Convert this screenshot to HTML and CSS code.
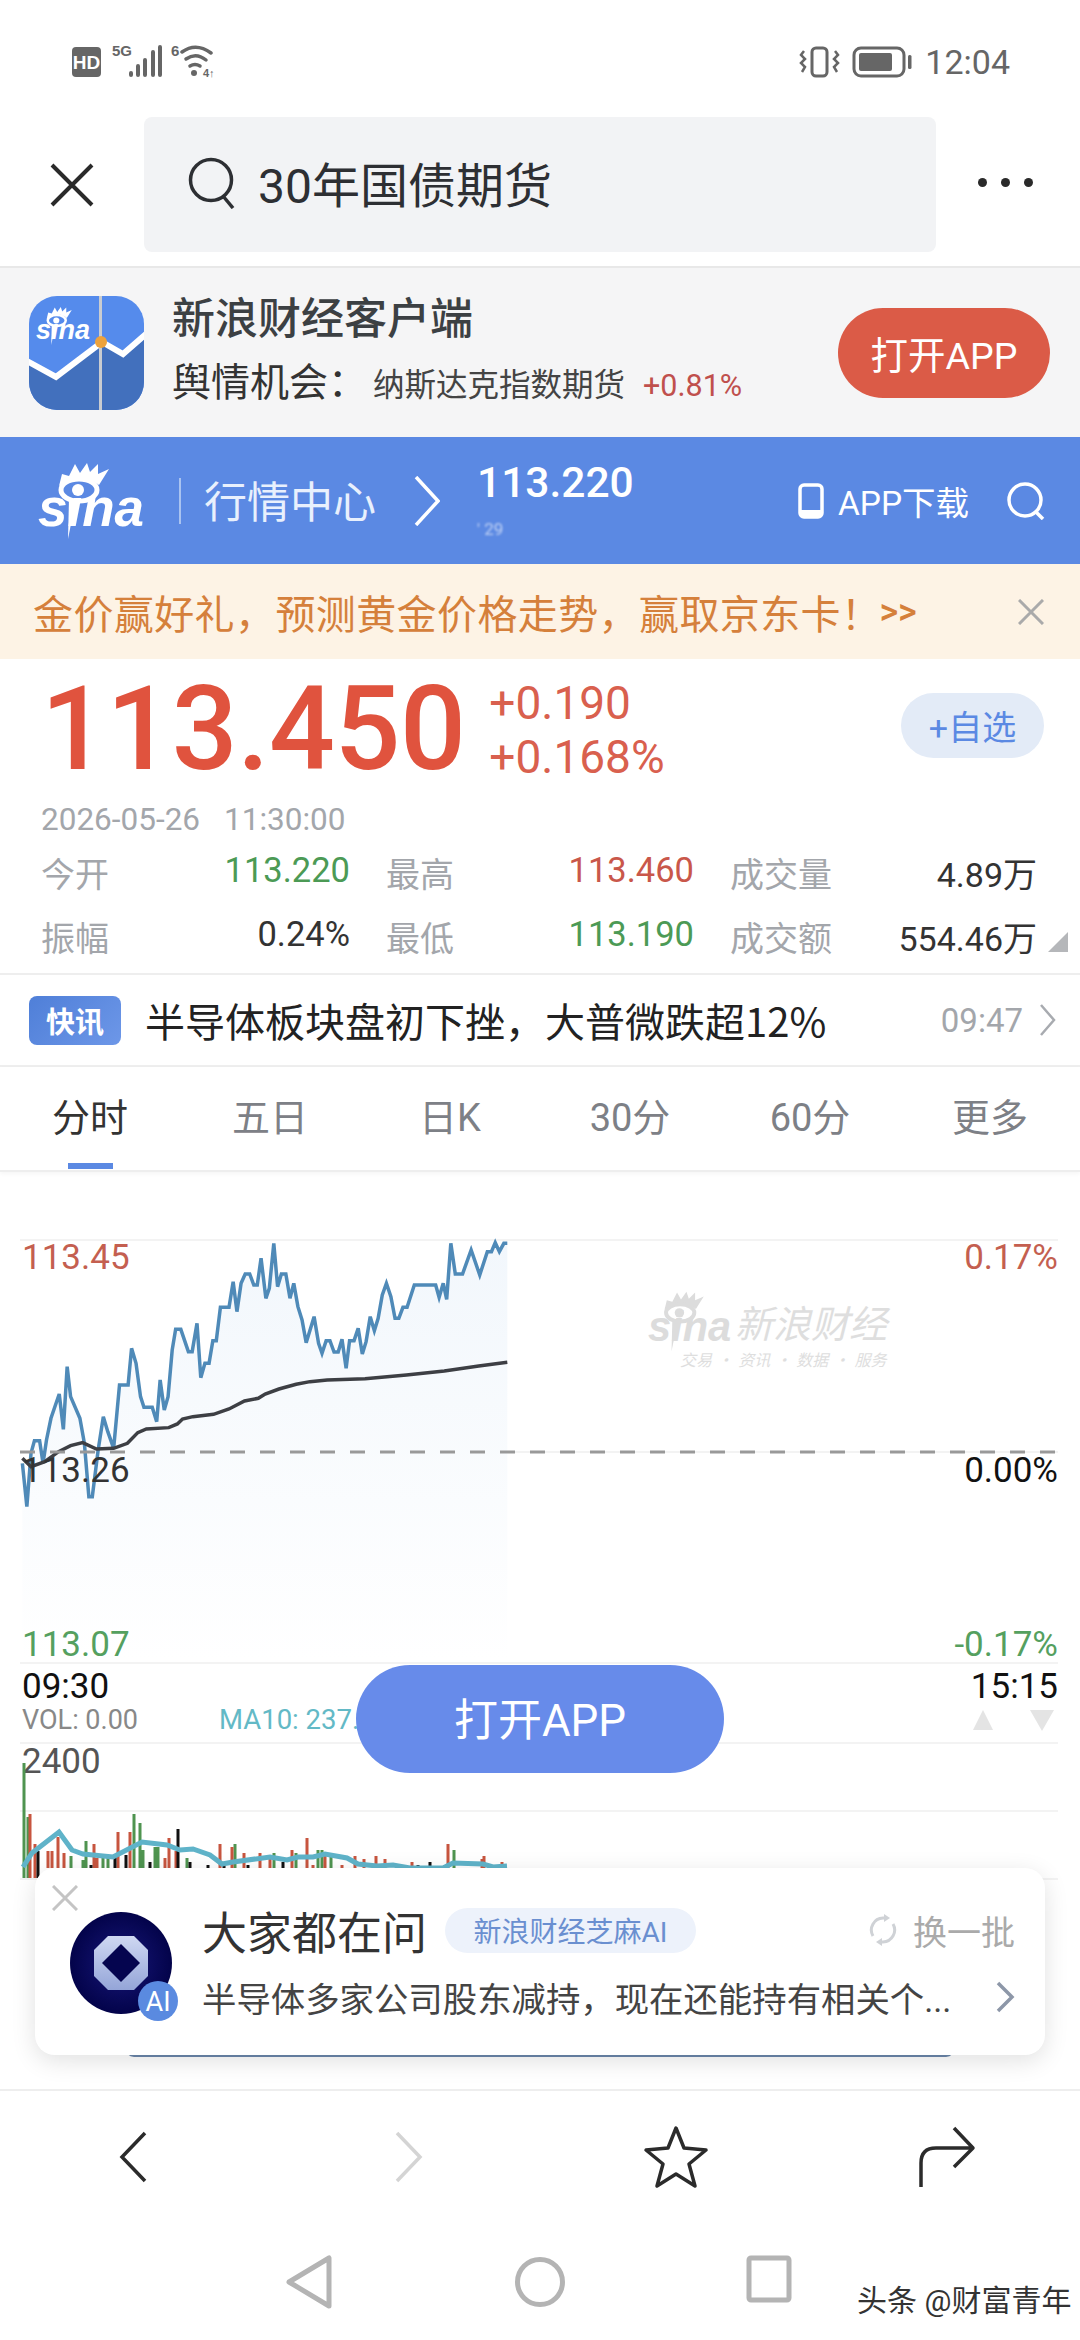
FILE: index.html
```html
<!DOCTYPE html>
<html lang="zh-CN">
<head>
  <meta charset="UTF-8">
  <meta name="viewport" content="width=device-width, initial-scale=1.0">
  <title>30年国债期货</title>
  <link rel="stylesheet" href="styles.css">
</head>
<body>
  <svg class="defs" width="0" height="0">
    <symbol id="sina-eye" viewBox="0 0 107 80">
      <path d="M21 25L24 13L31 15L37 3L42 12L49 2L52 11L60 3L60 13L71 8L61 24Q42 9 21 25Z" fill="currentColor"/>
      <ellipse cx="41" cy="29" rx="18" ry="11" fill="none" stroke="currentColor" stroke-width="5"/>
      <circle cx="40" cy="29" r="6" fill="currentColor"/>
      <polygon points="31,38 38,38 30,78" fill="currentColor"/>
    </symbol>
  </svg>

  <!-- status bar -->
  <div class="status">
    <svg class="status-left" width="150" height="40" viewBox="70 42 150 40">
      <rect x="72" y="47" width="29" height="30" rx="4" fill="#666"/>
      <text x="86.5" y="69" class="st-hd">HD</text>
      <text x="112" y="56" class="st-small">5G</text>
      <g stroke="#666" stroke-width="4" stroke-linecap="round">
        <path d="M131 73V75M138 66V75M145 60V75M153 52V75M160 47V75"/>
      </g>
      <text x="171" y="56" class="st-small">6</text>
      <g fill="none" stroke="#666" stroke-width="3.5" stroke-linecap="round">
        <path d="M182 52Q196 42 211 53"/>
        <path d="M186 59Q196 52 206 60"/>
        <path d="M190 66Q195 63 200 66"/>
      </g>
      <circle cx="194" cy="73" r="3" fill="#666"/>
      <text x="203" y="77" class="st-tiny">4↑</text>
    </svg>
    <div class="status-right">
      <svg width="42" height="34" viewBox="802 44 42 34">
        <rect x="816" y="47" width="15" height="28" rx="4" fill="none" stroke="#666" stroke-width="3"/>
        <path d="M808 50L805 54L809 58L805 62L809 66L806 71M839 50L842 54L838 58L842 62L838 66L841 71" fill="none" stroke="#666" stroke-width="2.5"/>
      </svg>
      <svg width="62" height="34" viewBox="854 44 62 34">
        <rect x="857" y="47" width="50" height="28" rx="7" fill="none" stroke="#666" stroke-width="3"/>
        <rect x="862" y="52" width="33" height="18" rx="2" fill="#666"/>
        <rect x="911" y="54" width="3.5" height="14" rx="1.5" fill="#666"/>
      </svg>
      <span class="status-time">12:04</span>
    </div>
  </div>

  <!-- browser top bar -->
  <div class="topbar">
    <svg class="top-close" width="44" height="44" viewBox="0 0 44 44">
      <path d="M2 2L42 42M42 2L2 42" stroke="#2a2a2a" stroke-width="4" fill="none"/>
    </svg>
    <div class="searchbox">
      <svg width="48" height="52" viewBox="0 0 48 52">
        <circle cx="23" cy="23" r="20.5" fill="none" stroke="#2d2f33" stroke-width="3.5"/>
        <path d="M35 39L45 51" stroke="#2d2f33" stroke-width="3.5"/>
      </svg>
      <span class="search-text">30年国债期货</span>
    </div>
    <div class="top-more"><i></i><i></i><i></i></div>
  </div>

  <!-- app banner -->
  <div class="banner">
    <svg class="app-icon" width="115" height="114" viewBox="0 0 115 114">
      <defs>
        <clipPath id="icon-clip"><rect width="115" height="114" rx="28"/></clipPath>
      </defs>
      <g clip-path="url(#icon-clip)">
        <rect width="115" height="114" fill="#558bec"/>
        <polygon points="0,66 27,81 73,46 94,58 115,39 115,114 0,114" fill="#4270bd"/>
        <polyline points="-2,65 27,81 73,46 94,58 117,38" fill="none" stroke="#fff" stroke-width="6"/>
        <rect x="70" width="3" height="114" fill="#c9ccd0"/>
        <circle cx="72" cy="46" r="6" fill="#eda23c"/>
      </g>
      <g class="icon-logo">
        <use href="#sina-eye" x="7" y="10" width="54" height="40"/>
        <text x="7" y="43" class="sina-word sina-small">sina</text>
      </g>
    </svg>
    <div class="banner-text">
      <div class="banner-title">新浪财经客户端</div>
      <div class="banner-sub">
        <span class="banner-lead">舆情机会：</span>
        <span class="banner-name">纳斯达克指数期货</span>
        <span class="banner-rate">+0.81%</span>
      </div>
    </div>
    <div class="banner-btn">打开APP</div>
  </div>

  <!-- sina header -->
  <div class="header">
    <svg class="header-logo" width="107" height="80" viewBox="0 0 107 80">
      <use href="#sina-eye" width="107" height="80"/>
      <text x="0" y="65" class="sina-word">sina</text>
    </svg>
    <span class="header-line"></span>
    <span class="header-title">行情中心</span>
    <svg class="header-arrow" width="26" height="50" viewBox="0 0 26 50">
      <path d="M2 1L24 25L2 49" fill="none" stroke="#fff" stroke-width="3.5"/>
    </svg>
    <div class="header-price">
      <div class="header-num">113.220</div>
      <div class="header-blur">' 29</div>
    </div>
    <svg class="header-phone" width="26" height="36" viewBox="0 0 26 36">
      <rect x="2" y="2" width="22" height="32" rx="4" fill="none" stroke="#fff" stroke-width="3.5"/>
      <rect x="3" y="27" width="20" height="7" fill="#fff"/>
    </svg>
    <span class="header-app">APP下载</span>
    <svg class="header-search" width="40" height="38" viewBox="0 0 40 38">
      <circle cx="19" cy="18" r="16" fill="none" stroke="#fff" stroke-width="3.5"/>
      <path d="M29 29L37 37" stroke="#fff" stroke-width="3.5"/>
    </svg>
  </div>

  <!-- notice -->
  <div class="notice">
    <span class="notice-text">金价赢好礼，预测黄金价格走势，赢取京东卡！</span>
    <span class="notice-more">&gt;&gt;</span>
    <svg class="notice-close" width="26" height="26" viewBox="0 0 26 26">
      <path d="M1 1L25 25M25 1L1 25" stroke="#aaa" stroke-width="3"/>
    </svg>
  </div>

  <!-- quote -->
  <div class="quote">
    <div class="price-row">
      <div class="price">113.450</div>
      <div class="change">
        <div>+0.190</div>
        <div>+0.168%</div>
      </div>
      <div class="watch">+自选</div>
    </div>
    <div class="quote-date"><span>2026-05-26</span><span>11:30:00</span></div>
    <div class="stats">
      <div class="stat"><span class="stat-label">今开</span><span class="num green">113.220</span></div>
      <div class="stat"><span class="stat-label">最高</span><span class="num red">113.460</span></div>
      <div class="stat"><span class="stat-label">成交量</span><span class="dark">4.89万</span></div>
      <div class="stat"><span class="stat-label">振幅</span><span class="num dark">0.24%</span></div>
      <div class="stat"><span class="stat-label">最低</span><span class="num green">113.190</span></div>
      <div class="stat"><span class="stat-label">成交额</span><span class="dark">554.46万</span></div>
    </div>
    <span class="corner"></span>
  </div>

  <!-- flash news -->
  <div class="flash">
    <span class="flash-tag">快讯</span>
    <span class="flash-title">半导体板块盘初下挫，大普微跌超12%</span>
    <span class="flash-time">09:47</span>
    <svg width="17" height="34" viewBox="0 0 17 34">
      <path d="M2 2L15 17L2 32" fill="none" stroke="#a8abb0" stroke-width="2.5"/>
    </svg>
  </div>

  <!-- tabs -->
  <div class="tabs">
    <div class="tab tab-on">分时</div>
    <div class="tab">五日</div>
    <div class="tab">日K</div>
    <div class="tab">30分</div>
    <div class="tab">60分</div>
    <div class="tab">更多</div>
  </div>

  <!-- chart, drawn in page coordinates -->
  <svg class="chart" width="1080" height="917" viewBox="0 1172 1080 917">
    <defs>
      <linearGradient id="area" x1="0" y1="0" x2="0" y2="1">
        <stop offset="0" stop-color="#f2f7fc"/>
        <stop offset="1" stop-color="#ffffff"/>
      </linearGradient>
    </defs>
    <g class="grid-lines">
      <path d="M20 1240H1058M20 1663H1058M20 1743H1058M20 1811H1058M20 1879H1058M20 1452H1058"/>
    </g>
    <g transform="translate(0 1200) scale(.3444 .3333)">
      <polygon fill="url(#area)" points="65,790 78,920 90,760 100,722 115,722 125,790 135,720 148,655 172,582 184,688 195,500 205,590 232,655 245,730 258,890 268,890 285,750 300,650 313,695 330,745 347,555 372,555 382,445 395,490 408,590 418,622 442,622 455,665 465,540 477,630 488,590 500,450 510,388 525,388 547,455 558,455 572,370 583,533 595,490 607,490 618,422 628,422 640,322 665,322 677,245 688,335 700,250 712,222 725,222 737,255 747,255 758,175 772,295 782,265 795,130 806,260 817,222 830,222 842,295 853,250 865,320 877,360 889,428 912,350 925,430 935,460 947,422 958,422 970,456 982,456 993,418 1005,505 1015,422 1028,422 1040,385 1052,462 1063,425 1075,350 1087,392 1098,355 1110,285 1122,250 1135,290 1147,355 1158,355 1170,322 1182,322 1203,255 1265,255 1275,292 1287,250 1297,298 1309,130 1322,222 1343,222 1368,150 1393,225 1415,155 1427,155 1438,128 1450,155 1463,130 1473,130 1473,1380 65,1380"/>
      <polyline class="line-price" points="65,790 78,920 90,760 100,722 115,722 125,790 135,720 148,655 172,582 184,688 195,500 205,590 232,655 245,730 258,890 268,890 285,750 300,650 313,695 330,745 347,555 372,555 382,445 395,490 408,590 418,622 442,622 455,665 465,540 477,630 488,590 500,450 510,388 525,388 547,455 558,455 572,370 583,533 595,490 607,490 618,422 628,422 640,322 665,322 677,245 688,335 700,250 712,222 725,222 737,255 747,255 758,175 772,295 782,265 795,130 806,260 817,222 830,222 842,295 853,250 865,320 877,360 889,428 912,350 925,430 935,460 947,422 958,422 970,456 982,456 993,418 1005,505 1015,422 1028,422 1040,385 1052,462 1063,425 1075,350 1087,392 1098,355 1110,285 1122,250 1135,290 1147,355 1158,355 1170,322 1182,322 1203,255 1265,255 1275,292 1287,250 1297,298 1309,130 1322,222 1343,222 1368,150 1393,225 1415,155 1427,155 1438,128 1450,155 1463,130 1473,130"/>
      <polyline class="line-avg" points="65,775 90,800 130,785 170,755 205,737 240,728 280,747 330,745 370,730 400,698 425,687 490,683 515,672 530,657 560,650 620,643 665,627 710,603 750,595 770,582 810,567 860,553 900,545 950,540 1060,536 1180,525 1290,513 1390,498 1473,487"/>
    </g>
    <path class="line-dash" d="M20 1452H1058"/>

    <g class="watermark">
      <svg x="648" y="1290" width="84" height="63" viewBox="0 0 107 80">
        <use href="#sina-eye" width="107" height="80"/>
        <text x="0" y="65" class="sina-word">sina</text>
      </svg>
      <text x="735" y="1338" class="wm-title">新浪财经</text>
      <text x="680" y="1366" class="wm-sub">交易 · 资讯 · 数据 · 服务</text>
    </g>

    <text x="22" y="1269" class="axis red-soft">113.45</text>
    <text x="22" y="1482" class="axis dark">113.26</text>
    <text x="22" y="1656" class="axis green-soft">113.07</text>
    <text x="1058" y="1269" class="axis end red-soft">0.17%</text>
    <text x="1058" y="1482" class="axis end black">0.00%</text>
    <text x="1058" y="1656" class="axis end green-soft">-0.17%</text>
    <text x="22" y="1698" class="axis black">09:30</text>
    <text x="1058" y="1698" class="axis end black">15:15</text>
    <text x="22" y="1729" class="vol">VOL: 0.00</text>
    <text x="219" y="1729" class="ma">MA10: 237.</text>
    <text x="22" y="1773" class="axis gray">2400</text>
    <polygon points="983,1710 973,1730 993,1730" fill="#e4e4e4"/>
    <polygon points="1030,1710 1054,1710 1042,1731" fill="#e4e4e4"/>

    <path class="bar bar-green" d="M24 1763V1878M28 1817V1878M71 1856V1868M83 1860V1868M86 1841V1868M103 1858V1868M108 1858V1868M134 1814V1868M140 1823V1868M143 1850V1868M155 1847V1868M158 1847V1868M187 1858V1868M235 1844V1868M274 1853V1868M296 1853V1868M318 1850V1868M322 1850V1868M331 1857V1868M454 1850V1868"/>
    <path class="bar bar-red" d="M30 1814V1878M35 1844V1878M48 1851V1868M52 1851V1868M58 1837V1868M64 1853V1868M94 1844V1868M97 1858V1868M118 1832V1868M130 1832V1868M165 1858V1868M169 1838V1868M176 1851V1868M220 1844V1868M232 1847V1868M244 1853V1868M260 1853V1868M270 1856V1868M292 1850V1868M307 1838V1868M313 1865V1868M325 1855V1868M342 1865V1868M355 1856V1868M364 1859V1868M376 1856V1868M385 1859V1868M412 1862V1868M448 1844V1868M482 1859V1868M484 1856V1868M502 1862V1868"/>
    <path class="bar bar-black" d="M38 1851V1878M91 1865V1868M115 1855V1868M126 1855V1868M150 1862V1868M178 1829V1868M190 1862V1868M208 1865V1868M224 1865V1868M248 1865V1868M283 1862V1868M418 1865V1868M430 1862V1868"/>
    <polyline class="line-ma" points="23,1867 32,1853 59,1832 72,1850 83,1854 113,1857 142,1842 167,1845 180,1850 193,1849 210,1855 222,1864 233,1862 270,1857 287,1860 298,1857 313,1857 325,1854 347,1858 358,1864 377,1866 393,1865 410,1868 443,1868 453,1863 483,1864 493,1867 507,1866"/>
  </svg>

  <!-- bottom toolbar -->
  <div class="toolbar">
    <svg width="28" height="52" viewBox="0 0 28 52"><path d="M26 2L3 26L26 50" class="tool-icon"/></svg>
    <svg width="28" height="52" viewBox="0 0 28 52"><path d="M2 2L25 26L2 50" class="tool-icon tool-off"/></svg>
    <svg width="66" height="64" viewBox="0 0 66 64"><path d="M33 3L41 23L63 25L46 39L52 61L33 49L14 61L20 39L3 25L25 23Z" class="tool-icon round"/></svg>
    <svg width="58" height="64" viewBox="0 0 58 64"><path d="M3 62V38Q3 23 18 23H54M36 3L55 23L36 42" class="tool-icon round"/></svg>
  </div>

  <div class="sysnav">
    <svg width="46" height="54" viewBox="0 0 46 54"><path d="M43 3V51L3 27Z" class="sys-icon"/></svg>
    <svg width="52" height="54" viewBox="0 0 52 54"><circle cx="26" cy="27" r="22.5" class="sys-icon"/></svg>
    <svg width="46" height="48" viewBox="0 0 46 48"><rect x="3" y="3" width="40" height="42" rx="2" class="sys-icon"/></svg>
  </div>

  <!-- floating items -->
  <div class="open-btn">打开APP</div>
  <span class="under-card"></span>
  <div class="ask-card">
    <svg class="ask-close" width="26" height="26" viewBox="0 0 26 26">
      <path d="M1 1L25 25M25 1L1 25" stroke="#c4c4c4" stroke-width="3"/>
    </svg>
    <svg class="ask-avatar" width="110" height="110" viewBox="0 0 110 110">
      <defs>
        <radialGradient id="navy" cx=".5" cy=".5" r=".5">
          <stop offset="0" stop-color="#17177a"/>
          <stop offset="1" stop-color="#03034a"/>
        </radialGradient>
        <linearGradient id="ring" x1="0" y1="0" x2="0" y2="1">
          <stop offset="0" stop-color="#cfd8f2"/>
          <stop offset="1" stop-color="#94a5d8"/>
        </linearGradient>
      </defs>
      <circle cx="51" cy="51" r="51" fill="url(#navy)"/>
      <polygon points="38,24 64,24 78,38 78,64 64,78 38,78 24,64 24,38" fill="url(#ring)"/>
      <polygon points="51,32 70,51 51,70 32,51" fill="#05054f"/>
      <circle cx="88" cy="89" r="20" fill="#5a8ae0"/>
      <text x="88" y="99" class="ai-mark">AI</text>
    </svg>
    <div class="ask-body">
      <div class="ask-head">
        <span class="ask-title">大家都在问</span>
        <span class="ask-pill">新浪财经芝麻AI</span>
        <svg class="ask-refresh" width="30" height="32" viewBox="0 0 30 32">
          <path d="M5 22A12 12 0 0 1 15 4H19M25 10A12 12 0 0 1 15 28H11" fill="none" stroke="#cfd2d6" stroke-width="3"/>
          <path d="M16 0L22 4L16 8ZM14 24L8 28L14 32Z" fill="#cfd2d6"/>
        </svg>
        <span class="ask-swap">换一批</span>
      </div>
      <div class="ask-line">
        <span class="ask-text">半导体多家公司股东减持，现在还能持有相关个...</span>
        <svg width="20" height="32" viewBox="0 0 20 32">
          <path d="M3 2L17 16L3 30" fill="none" stroke="#8d97a8" stroke-width="3.5"/>
        </svg>
      </div>
    </div>
  </div>
  <div class="credit">头条 @财富青年</div>
</body>
</html>
```

FILE: styles.css
```css
* {
  box-sizing: border-box;
}

body {
  margin: 0;
  width: 1080px;
  height: 2340px;
  overflow: hidden;
  position: relative;
  background: #fff;
  font-family: Roboto, "Noto Sans CJK SC", sans-serif;
  color: #222;
}

svg {
  display: block;
  flex: none;
}

.defs {
  position: absolute;
}

.red { color: #c9574a; }
.green { color: #4c9a55; }
.dark { color: #333; }

/* status bar */
.status {
  height: 117px;
  display: flex;
  align-items: flex-start;
  justify-content: space-between;
  padding: 42px 70px 0 70px;
}

.status-right {
  display: flex;
  align-items: center;
  gap: 11px;
  height: 40px;
}

.status-time {
  font-size: 34px;
  color: #666;
  margin-left: 1px;
}

.st-hd {
  font: bold 19px "Liberation Sans", sans-serif;
  fill: #fff;
  text-anchor: middle;
}

.st-small {
  font: bold 15px "Liberation Sans", sans-serif;
  fill: #666;
}

.st-tiny {
  font: bold 11px "Liberation Sans", sans-serif;
  fill: #666;
}

/* top bar */
.topbar {
  height: 151px;
  display: flex;
  align-items: flex-start;
  border-bottom: 2px solid #e8e8e8;
  padding-left: 50px;
}

.top-close {
  margin-top: 46px;
}

.searchbox {
  width: 792px;
  height: 135px;
  margin-left: 50px;
  background: #f2f3f5;
  border-radius: 8px;
  display: flex;
  align-items: center;
  gap: 22px;
  padding: 0 0 3px 44px;
}

.search-text {
  font-size: 48px;
  color: #2d2f33;
  padding-bottom: 2px;
}

.top-more {
  display: flex;
  gap: 14px;
  margin: 61px 0 0 42px;
}

.top-more i {
  width: 9px;
  height: 9px;
  border-radius: 50%;
  background: #2a2a2a;
}

/* app banner */
.banner {
  height: 169px;
  background: #f5f5f6;
  display: flex;
  align-items: center;
  padding: 0 30px 0 29px;
}

.icon-logo {
  color: #fff;
}

.banner-text {
  margin-left: 28px;
}

.banner-title {
  font-size: 43px;
  font-weight: 500;
  line-height: 56px;
  color: #3c4043;
}

.banner-sub {
  display: flex;
  align-items: baseline;
  margin-top: 8px;
  line-height: 56px;
}

.banner-lead {
  font-size: 39px;
  color: #333;
  width: 201px;
}

.banner-name {
  font-size: 31.5px;
  color: #444;
  margin-right: 18px;
}

.banner-rate {
  font-size: 30.5px;
  color: #c0504d;
}

.banner-btn {
  margin-left: auto;
  width: 212px;
  height: 90px;
  border-radius: 45px;
  background: #db5b47;
  color: #fff;
  font-size: 37.5px;
  display: flex;
  align-items: center;
  justify-content: center;
}

/* sina header */
.header {
  height: 127px;
  background: #5b89e3;
  color: #fff;
  display: flex;
  align-items: center;
  padding-left: 38px;
}

.sina-word {
  font: italic bold 53px "Liberation Sans", sans-serif;
  fill: currentColor;
}

.sina-small {
  font-size: 27px;
}

.header-logo {
  color: #fff;
}

.header-line {
  width: 2px;
  height: 46px;
  background: #a9c3f0;
  margin-left: 34px;
}

.header-title {
  font-size: 43px;
  margin-left: 23px;
  padding-bottom: 3px;
  color: #e8f0fd;
}

.header-arrow {
  margin-left: 38px;
}

.header-price {
  margin-left: 37px;
  width: 321px;
  align-self: flex-start;
  padding-top: 22px;
}

.header-num {
  font-size: 42.5px;
  font-weight: 500;
  line-height: 48px;
}

.header-blur {
  font-size: 17px;
  line-height: 20px;
  margin-top: 12px;
  filter: blur(1px);
  opacity: .6;
}

.header-app {
  font-size: 33.5px;
  margin-left: 14px;
}

.header-search {
  margin-left: 37px;
}

/* notice */
.notice {
  height: 95px;
  background: #fdf3e5;
  display: flex;
  align-items: center;
  padding-left: 33px;
}

.notice-text {
  font-size: 40px;
  letter-spacing: .4px;
  color: #d5803b;
  white-space: nowrap;
}

.notice-more {
  font-size: 36px;
  font-weight: 500;
  color: #d5803b;
  margin-left: -2px;
}

.notice-close {
  margin-left: auto;
  margin-right: 36px;
}

/* quote */
.quote {
  height: 316px;
  padding: 12px 0 0 41px;
  border-bottom: 2px solid #eee;
  position: relative;
}

.price-row {
  display: flex;
  align-items: flex-start;
}

.price {
  font-size: 116px;
  font-weight: 500;
  line-height: 116px;
  color: #e0533e;
  letter-spacing: -.5px;
}

.change {
  margin: 5px 0 0 24px;
  font-size: 46px;
  line-height: 54px;
  color: #d9604e;
}

.watch {
  margin: 22px 36px 0 auto;
  width: 143px;
  height: 65px;
  border-radius: 33px;
  background: #e3ebf7;
  color: #5b89e3;
  font-size: 34px;
  display: flex;
  align-items: center;
  justify-content: center;
}

.quote-date {
  margin-top: 13px;
  font-size: 31.5px;
  line-height: 40px;
  color: #a3a6ab;
  display: flex;
  gap: 24px;
}

.stats {
  display: grid;
  grid-template-columns: 309px 308px 307px;
  grid-auto-rows: 64px;
  column-gap: 36px;
}

.stat {
  display: flex;
  align-items: center;
  justify-content: space-between;
  font-size: 34px;
  white-space: nowrap;
}

.stat-label {
  color: #a3a6ab;
}

.num {
  font-size: 34.5px;
  padding-bottom: 5px;
}

.corner {
  position: absolute;
  right: 12px;
  bottom: 21px;
  width: 0;
  height: 0;
  border-left: 20px solid transparent;
  border-bottom: 20px solid #b5b7ba;
}

/* flash news */
.flash {
  height: 92px;
  border-bottom: 2px solid #eee;
  display: flex;
  align-items: center;
  padding-left: 29px;
}

.flash-tag {
  width: 92px;
  height: 49px;
  border-radius: 8px;
  background: linear-gradient(135deg, #4f7fd8, #6d97e8);
  color: #fff;
  font-size: 29px;
  font-weight: 700;
  display: flex;
  align-items: center;
  justify-content: center;
}

.flash-title {
  margin-left: 24px;
  font-family: "Noto Sans CJK SC", sans-serif;
  font-size: 40px;
  color: #222;
}

.flash-time {
  margin: 0 16px 0 auto;
  font-size: 33px;
  color: #a3a6ab;
}

.flash svg {
  margin-right: 24px;
}

/* tabs */
.tabs {
  height: 105px;
  display: grid;
  grid-template-columns: repeat(6, 180px);
  border-bottom: 2px solid #eee;
  box-shadow: 0 2px 4px rgba(0, 0, 0, .04);
}

.tab {
  font-size: 38px;
  color: #7d8086;
  text-align: center;
  line-height: 102px;
  position: relative;
}

.tab-on {
  color: #333;
}

.tab-on::after {
  content: "";
  position: absolute;
  left: 68px;
  bottom: 1px;
  width: 45px;
  height: 6px;
  background: #5b89e3;
}

/* chart */
.grid-lines path {
  stroke: #f3f3f3;
  stroke-width: 2;
  fill: none;
}

.line-price {
  fill: none;
  stroke: #4f8ab8;
  stroke-width: 3.5;
  vector-effect: non-scaling-stroke;
}

.line-avg {
  fill: none;
  stroke: #3d3f44;
  stroke-width: 3.5;
  vector-effect: non-scaling-stroke;
}

.line-dash {
  fill: none;
  stroke: #999;
  stroke-width: 3;
  stroke-dasharray: 15 15;
}

.line-ma {
  fill: none;
  stroke: #5fb3c9;
  stroke-width: 5;
}

.bar {
  fill: none;
  stroke-width: 3;
}

.bar-green { stroke: #4f9450; }
.bar-red { stroke: #c7553f; }
.bar-black { stroke: #111; }

.axis {
  font-size: 35px;
}

.end {
  text-anchor: end;
}

.red-soft { fill: #c45f50; }
.green-soft { fill: #55a05f; }
.axis.dark { fill: #333; }
.black { fill: #111; }
.gray { fill: #555; }

.vol {
  font-size: 27px;
  fill: #888;
}

.ma {
  font-size: 27.5px;
  fill: #63b9c6;
}

.watermark {
  color: #dcdcdc;
}

.wm-title {
  font: italic 38px "Noto Sans CJK SC", sans-serif;
  fill: #dedede;
}

.wm-sub {
  font: italic 16px "Noto Sans CJK SC", sans-serif;
  word-spacing: 1.5px;
  fill: #dedede;
}

/* bottom toolbar */
.toolbar {
  height: 136px;
  border-top: 2px solid #eee;
  display: grid;
  grid-template-columns: 276px 248px 275px 100px;
  align-items: center;
  padding-left: 119px;
  padding-bottom: 2px;
}

.tool-icon {
  fill: none;
  stroke: #2b2b2b;
  stroke-width: 3.5;
}

.tool-off {
  stroke: #d4d4d4;
}

.round {
  stroke-linejoin: round;
}

.sysnav {
  height: 115px;
  display: grid;
  grid-template-columns: 228px 232px 100px;
  align-items: start;
  padding: 30px 0 0 286px;
}

.sys-icon {
  fill: none;
  stroke: #b4b4b4;
  stroke-width: 5;
  stroke-linejoin: round;
}

/* floating items */
.open-btn {
  position: absolute;
  left: 356px;
  top: 1665px;
  width: 368px;
  height: 108px;
  border-radius: 54px;
  background: #678bea;
  color: #fff;
  font-size: 44px;
  padding-bottom: 5px;
  display: flex;
  align-items: center;
  justify-content: center;
}

.under-card {
  position: absolute;
  left: 125px;
  top: 2048px;
  width: 830px;
  height: 9px;
  border-radius: 0 0 10px 10px;
  background: #6b87ab;
}

.ask-card {
  position: absolute;
  left: 35px;
  top: 1868px;
  width: 1010px;
  height: 187px;
  background: #fff;
  border-radius: 20px;
  box-shadow: 0 6px 24px rgba(0, 0, 0, .12);
  display: flex;
  align-items: flex-start;
  padding: 44px 30px 0 35px;
}

.ask-close {
  position: absolute;
  left: 17px;
  top: 17px;
}

.ask-avatar {
  overflow: visible;
}

.ai-mark {
  font-size: 27px;
  fill: #fff;
  text-anchor: middle;
}

.ask-body {
  margin-left: 22px;
  flex: 1;
  margin-top: -12px;
}

.ask-head {
  display: flex;
  align-items: center;
  height: 60px;
}

.ask-title {
  font-size: 45px;
  color: #333;
}

.ask-pill {
  margin-left: 18px;
  width: 251px;
  height: 45px;
  border-radius: 23px;
  background: #edf2fb;
  color: #6a8fd0;
  font-size: 28px;
  display: flex;
  align-items: center;
  justify-content: center;
}

.ask-refresh {
  margin-left: auto;
}

.ask-swap {
  margin-left: 15px;
  font-size: 34px;
  color: #aaa;
}

.ask-line {
  display: flex;
  align-items: center;
  justify-content: space-between;
  margin-top: 12px;
}

.ask-text {
  font-size: 34.4px;
  color: #444;
  white-space: nowrap;
}

.credit {
  position: absolute;
  left: 857px;
  top: 2281px;
  font-size: 30px;
  line-height: 40px;
  color: #333;
  white-space: nowrap;
}
```
